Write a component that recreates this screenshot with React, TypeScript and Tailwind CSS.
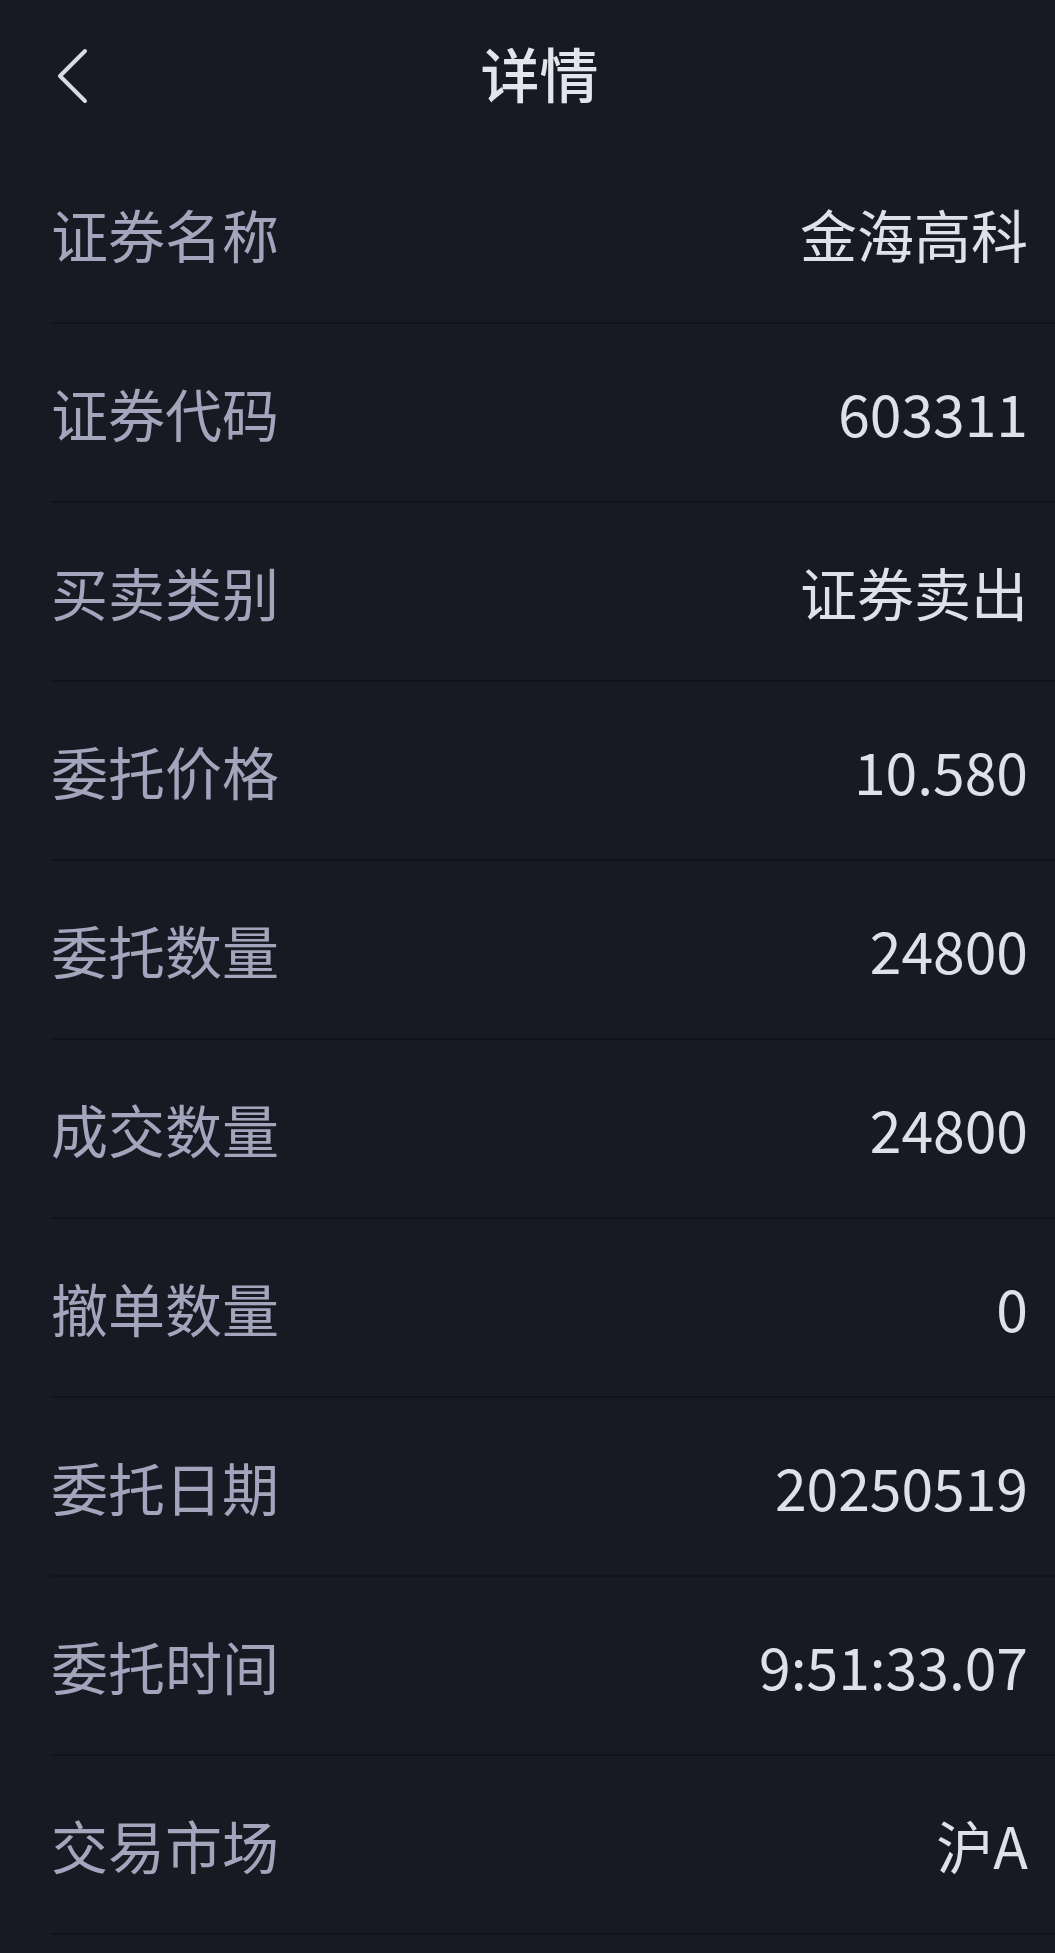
const rows: [string, string][] = [
  ['证券名称', '金海高科'],
  ['证券代码', '603311'],
  ['买卖类别', '证券卖出'],
  ['委托价格', '10.580'],
  ['委托数量', '24800'],
  ['成交数量', '24800'],
  ['撤单数量', '0'],
  ['委托日期', '20250519'],
  ['委托时间', '9:51:33.07'],
  ['交易市场', '沪A'],
];

export default function App() {
  return (
    <div
      className="min-h-[1953px] w-full bg-[#181a23]"
      style={{ fontFamily: '"Noto Sans CJK SC", "Noto Sans", sans-serif' }}
    >
      <header className="relative flex h-[145px] items-center justify-center pl-[24px]">
        <button className="absolute left-[52px] top-[46px] h-[60px] w-[40px]" aria-label="返回">
          <svg viewBox="0 0 40 60" className="h-[60px] w-[40px]" fill="none">
            <path d="M33 5 L8 30 L33 55" stroke="#d9dbe3" strokeWidth="4" strokeLinecap="round" strokeLinejoin="round" />
          </svg>
        </button>
        <h1 className="text-[59px] font-medium leading-none text-[#e3e5ec]">详情</h1>
      </header>

      <div className="pl-[51px]">
        {rows.map(([label, value]) => (
          <div
            key={label}
            className="flex h-[179px] items-center justify-between border-b-2 border-[#11131a] pr-[27px]"
          >
            <span className="text-[57px] leading-none text-[#a3a5bc]">{label}</span>
            <span className="text-[57px] font-normal leading-none text-[#dfe1e9]">{value}</span>
          </div>
        ))}
      </div>
    </div>
  );
}
